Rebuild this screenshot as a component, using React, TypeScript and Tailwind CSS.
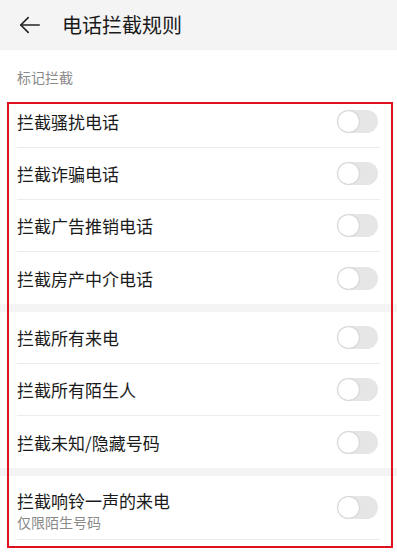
const groups = [
  [
    { title: "拦截骚扰电话" },
    { title: "拦截诈骗电话" },
    { title: "拦截广告推销电话" },
    { title: "拦截房产中介电话" },
  ],
  [
    { title: "拦截所有来电" },
    { title: "拦截所有陌生人" },
    { title: "拦截未知/隐藏号码" },
  ],
  [{ title: "拦截响铃一声的来电", sub: "仅限陌生号码" }],
];

function Toggle() {
  return (
    <div className="flex h-[23px] w-[41px] shrink-0 items-center rounded-full bg-[#e6e6e6] p-[1px]">
      <div className="h-[21px] w-[21px] rounded-full bg-white shadow-[0_0_2px_rgba(0,0,0,0.25)]" />
    </div>
  );
}

export default function App() {
  return (
    <main
      className="relative min-h-screen bg-white text-[#1a1a1a]"
      style={{ fontFamily: '"Noto Sans CJK SC", "Noto Sans", sans-serif' }}
    >
      <header className="flex h-[50px] items-center bg-[#f4f4f4]">
        <svg
          className="ml-[19px] h-[22px] w-[22px]"
          viewBox="0 0 24 24"
          fill="none"
          stroke="#222"
          strokeWidth="1.8"
          strokeLinecap="round"
          strokeLinejoin="round"
        >
          <path d="M22 12H2" />
          <path d="M10 4l-8 8 8 8" />
        </svg>
        <h1 className="ml-[21px] text-[20px] leading-none">电话拦截规则</h1>
      </header>

      <p className="px-[17px] pt-[17px] pb-[9px] text-[14px] leading-[20px] text-[#8a8a8a]">
        标记拦截
      </p>

      {groups.map((rows, gi) => (
        <section key={gi}>
          {gi > 0 && <div className="h-[8px] bg-[#f4f4f4]" />}
          {rows.map((row, ri) => {
            const last = ri === rows.length - 1;
            return (
              <div
                key={row.title}
                className={`mx-[17px] flex items-center justify-between ${
                  row.sub ? "h-[64px]" : "h-[52px]"
                } ${!last || row.sub ? "border-b border-[#ececec]" : ""}`}
              >
                <div className={row.sub ? "self-start pt-[14px]" : ""}>
                  <div className={row.sub ? "text-[17px] leading-[22px]" : "text-[17px] leading-[23px]"}>
                    {row.title}
                  </div>
                  {row.sub && (
                    <div className="text-[14px] leading-[20px] text-[#8a8a8a]">
                      {row.sub}
                    </div>
                  )}
                </div>
                <div className="mr-[2px]">
                  <Toggle />
                </div>
              </div>
            );
          })}
        </section>
      ))}

      <div className="pointer-events-none absolute left-[7px] top-[102px] h-[446px] w-[386px] border-2 border-[#e0101c]" />
    </main>
  );
}
